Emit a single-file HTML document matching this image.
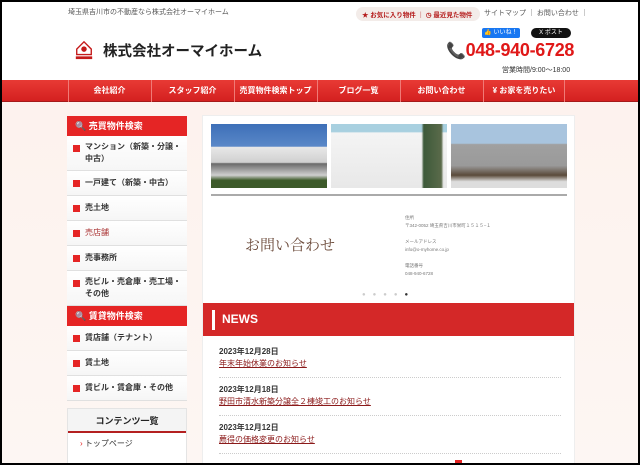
<!DOCTYPE html>
<html><head><meta charset="utf-8"><style>
*{box-sizing:border-box;margin:0;padding:0}
body{width:640px;height:465px;overflow:hidden;font-family:"Liberation Sans","Noto Sans CJK JP",sans-serif;background:#000;position:relative}
#w{position:absolute;left:2px;top:2px;width:636px;height:461px;background:linear-gradient(#fdf1ec,#fdf6f3);overflow:hidden}
.a{position:absolute}
#hd{left:0;top:0;width:636px;height:78px;background:#fff}
.t{font-size:7px;color:#555;white-space:nowrap}
#nav{left:0;top:78px;width:636px;height:22px;background:linear-gradient(#e83a35,#d42020);border-bottom:1px solid #a61a1a}
.ni{position:absolute;top:0;height:22px;line-height:22px;color:#fff;font-size:8px;font-weight:bold;text-align:center;width:82px;border-left:1px solid #f07a76}
.sb{left:65px;width:120px;background:#fff}
.sh{height:20px;background:#e52525;color:#fff;font-weight:bold;font-size:9px;line-height:20px;padding-left:8px}
.si{border-bottom:1px solid #e0e0e0;font-size:8px;color:#333;padding:6px 4px 6px 18px;position:relative;line-height:12px;background:linear-gradient(#fff,#f6f6f6);font-weight:bold}
.si:before{content:"";position:absolute;left:6px;top:9px;width:7px;height:7px;background:#e52525}
#mn{left:200px;top:113px;width:373px;height:360px;background:#fff;border:1px solid #eee}
.im{top:8px;height:64px;width:116px}
.nd{font-size:8px;color:#333;font-weight:bold;left:16px}
.nl{font-size:8px;color:#8b1a1a;text-decoration:underline;left:16px}
.sep{left:16px;width:342px;border-top:1px dotted #ccc}
</style></head><body><div id="w">
<div id="hd" class="a"></div>
<div class="a t" style="left:66px;top:5px">埼玉県吉川市の不動産なら株式会社オーマイホーム</div>
<div class="a" style="left:354px;top:5px;width:124px;height:14px;background:#f3ece9;border-radius:7px"></div>
<div class="a t" style="left:360px;top:7px;color:#b41a1a;font-weight:bold;font-size:6.5px">★ お気に入り物件 ｜ ◷ 最近見た物件</div>
<div class="a t" style="left:482px;top:6px;font-size:7px">サイトマップ ｜ お問い合わせ ｜</div>
<div class="a" style="left:480px;top:26px;width:38px;height:10px;background:#1877f2;border-radius:2px;color:#fff;font-size:6px;line-height:10px;text-align:center">👍 いいね！</div>
<div class="a" style="left:529px;top:26px;width:40px;height:10px;background:#111;border-radius:5px;color:#fff;font-size:6px;line-height:10px;text-align:center">X ポスト</div>
<svg class="a" style="left:72px;top:38px" width="20" height="20" viewBox="0 0 22 22"><path d="M3 10 L11 2 L19 10 V16 H3Z" fill="#fff" stroke="#c41a1a" stroke-width="1.5"/><circle cx="11" cy="10" r="3" fill="#c41a1a"/><rect x="2" y="18" width="18" height="3" fill="#c41a1a"/></svg>
<div class="a" style="left:101px;top:38px;font-size:14.5px;font-weight:bold;color:#222">株式会社オーマイホーム</div>
<div class="a" style="left:444px;top:38px;font-size:18px;font-weight:bold;color:#e01818;letter-spacing:-0.3px"><span style="color:#555;font-size:16px">📞</span>048-940-6728</div>
<div class="a t" style="left:500px;top:63px;font-size:7px;color:#333">営業時間/9:00〜18:00</div>
<div id="nav" class="a">
<div class="ni" style="left:66px">会社紹介</div><div class="ni" style="left:149px">スタッフ紹介</div><div class="ni" style="left:232px">売買物件検索トップ</div><div class="ni" style="left:315px">ブログ一覧</div><div class="ni" style="left:398px">お問い合わせ</div><div class="ni" style="left:481px;border-right:1px solid #f07a76">¥ お家を売りたい</div>
</div>
<div class="a sb" style="top:114px">
<div class="sh">🔍 売買物件検索</div>
<div class="si" style="padding-top:5px;padding-bottom:5px">マンション（新築・分譲・中古）</div>
<div class="si">一戸建て（新築・中古）</div>
<div class="si">売土地</div>
<div class="si" style="font-weight:normal;color:#a33">売店舗</div>
<div class="si">売事務所</div>
<div class="si" style="padding-top:5px;padding-bottom:5px">売ビル・売倉庫・売工場・その他</div>
<div class="sh">🔍 賃貸物件検索</div>
<div class="si">賃店舗（テナント）</div>
<div class="si">賃土地</div>
<div class="si">賃ビル・賃倉庫・その他</div>
</div>
<div class="a sb" style="top:406px;height:60px;border:1px solid #e4e4e4">
<div style="height:24px;line-height:24px;text-align:center;font-weight:bold;font-size:9px;color:#222;background:#f4f4f4;border-bottom:2px solid #b42020">コンテンツ一覧</div>
<div style="font-size:8px;padding:5px 12px;color:#333"><span style="color:#e52525">›</span> トップページ</div>
</div>
<div id="mn" class="a">
<div class="a im" style="left:8px;background:linear-gradient(#3d6fb8 0,#5a88c8 35%,#e8e8e8 36%,#d0d0d0 60%,#6a6a6a 62%,#cfcfcf 80%,#3d5a2a 88%)"></div>
<div class="a im" style="left:128px;background:linear-gradient(90deg,transparent 78%,#3d5a3a 80%,#5a6a4a 95%,transparent 97%),linear-gradient(#a8d0e0 0,#a8d0e0 12%,#f4f4f4 14%,#e8e8e8 100%)"></div>
<div class="a im" style="left:248px;background:linear-gradient(#a8c4de 0,#a8c4de 30%,#a0a0a0 32%,#9a9a9a 65%,#5a4a3a 80%,#ddd 90%)"></div>
<div class="a" style="left:8px;top:78px;width:356px;height:2px;background:#aaa"></div>
<div class="a" style="left:42px;top:118px;font-family:'Liberation Serif','Noto Serif CJK SC',serif;font-size:15px;color:#6b4a3a">お問い合わせ</div>
<div class="a" style="left:202px;top:98px;font-size:4.5px;color:#777;line-height:8px">住所<br>〒342-0052 埼玉県吉川市栄町１５１５−１<br><br>メールアドレス<br>info@o-myhome.co.jp<br><br>電話番号<br>048-940-6728</div>
<div class="a" style="left:159px;top:176px;font-size:6px;color:#ccc;letter-spacing:7px">●●●●<span style="color:#333">●</span></div>
<div class="a" style="left:0;top:187px;width:371px;height:33px;background:#d42828"></div>
<div class="a" style="left:9px;top:194px;width:3px;height:20px;background:#fff"></div>
<div class="a" style="left:19px;top:196px;color:#fff;font-weight:bold;font-size:12px">NEWS</div>
<div class="a nd" style="top:230px">2023年12月28日</div><div class="a nl" style="top:242px">年末年始休業のお知らせ</div><div class="a sep" style="top:261px"></div>
<div class="a nd" style="top:268px">2023年12月18日</div><div class="a nl" style="top:280px">野田市清水新築分譲全２棟竣工のお知らせ</div><div class="a sep" style="top:299px"></div>
<div class="a nd" style="top:306px">2023年12月12日</div><div class="a nl" style="top:318px">薦得の価格変更のお知らせ</div><div class="a sep" style="top:337px"></div>
<div class="a" style="left:252px;top:344px;width:7px;height:7px;background:#e52525"></div>
</div>
</div></body></html>
